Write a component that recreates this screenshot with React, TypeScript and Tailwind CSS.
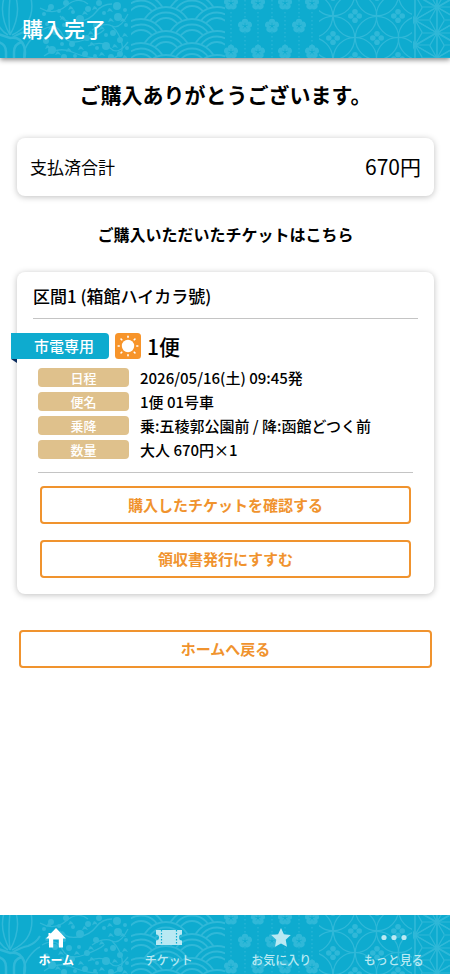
import { ReactNode } from "react";

const LINE = "#30b8d8";

const branches = [
  "M40 8 Q54 16 66 6 T88 4",
  "M42 30 Q56 22 62 34 T84 40 T104 30",
  "M44 56 Q58 46 72 52 T98 58",
  "M60 16 Q66 24 78 22 T96 12 T112 4",
  "M92 30 Q104 22 112 26 T128 14",
  "M88 46 Q102 40 110 48 T128 42",
  "M112 26 Q120 34 122 44 T114 58",
];

// x, y, radius
const plums = [
  [44, 14, 2], [51, 7, 3], [59, 11, 2], [66, 3, 3], [73, 12, 2], [80, 19, 4], [88, 9, 3],
  [99, 3, 3], [104, 13, 2], [117, 6, 4], [125, 10, 2], [47, 24, 2], [55, 32, 3], [64, 25, 2],
  [69, 33, 3], [46, 41, 3], [52, 50, 4], [62, 44, 2], [72, 44, 3], [79, 32, 2], [87, 38, 3],
  [96, 25, 3], [106, 35, 2], [118, 17, 4], [126, 25, 2], [113, 33, 3], [106, 46, 4], [97, 48, 2],
  [85, 54, 3], [75, 56, 2], [120, 40, 3], [127, 48, 2], [111, 57, 3], [64, 57, 3], [95, 56, 2],
  [120, 54, 3],
];

const twigs = [
  [48, 10], [62, 18], [70, 8], [84, 13], [94, 8], [109, 10], [122, 20], [50, 28], [60, 38],
  [76, 38], [90, 33], [101, 28], [110, 20], [124, 35], [47, 47], [57, 53], [68, 50], [80, 48],
  [91, 44], [101, 54], [114, 46], [124, 57],
];

const waves = [
  [141, -5], [192, -5], [166, 7], [217, 7], [141, 19], [192, 19], [166, 31], [217, 31],
  [141, 43], [192, 43], [166, 55], [217, 55],
];

const blossoms = [
  [231, 3], [258, 3], [285, 3], [312, 3], [245, 26], [272, 26], [299, 26],
  [231, 52], [258, 52], [285, 52], [312, 52],
];

const rings = [
  [311, 16], [355, 16], [398, 16], [333, 38], [377, 38], [420, 38], [333, -6], [377, -6],
  [420, -6], [355, 59], [398, 59], [311, 59],
];

const stars = [
  [415, -5], [415, 20], [415, 45], [437, -18], [437, 7], [437, 33], [437, 58], [459, -5],
  [459, 20], [459, 45], [415, 70],
];

function Pattern({ id }: { id: string }) {
  return (
    <svg
      className="absolute inset-0 h-full w-full"
      viewBox="0 0 450 59"
      preserveAspectRatio="xMidYMin slice"
      fill="none"
      stroke={LINE}
      aria-hidden="true"
    >
      <clipPath id={id + "-sea"}><rect x="131" width="94" height="59" /></clipPath>
      <clipPath id={id + "-ring"}><rect x="319" width="93" height="59" /></clipPath>
      <clipPath id={id + "-star"}><rect x="413" width="40" height="59" /></clipPath>

      {/* noshi knot */}
      <g strokeWidth="1.5">
        <path d="M10 35 Q-1 15 4 -2 M10 35 Q21 15 16 -2 M10 35 Q8 16 10 -2 M12 35 Q36 24 31 -2 M8 35 Q-4 28 -6 10" />
        <path d="M13 37 Q22 32 28 31 Q36 28 40 21" strokeWidth="2" />
        <path d="M24 59 Q23 50 29 42 T40 32" />
      </g>
      <path
        d="M-2 34 Q10 38 10 38 Q20 36 24 46 Q26 52 24 60 M-2 42 Q6 44 6 52 L6 60 M14 60 L14 52 Q14 44 22 42"
        strokeWidth="2.5"
      />

      {/* plum branches */}
      {branches.map((d) => <path key={d} d={d} strokeWidth="1.3" />)}
      <g fill={LINE} stroke="none">
        {plums.map(([x, y, r]) => <circle key={x + "-" + y} cx={x} cy={y} r={r} />)}
        {twigs.map(([x, y]) => (
          <path key={x + "-" + y} d={`M${x - 2} ${y + 2}l2-4 2 1 2 3-3-1z`} />
        ))}
      </g>

      {/* waves */}
      <g clipPath={`url(#${id}-sea)`} strokeWidth="1.8">
        {waves.map(([x, y]) => (
          <g key={x + "-" + y} fill="#0eabcf">
            <circle cx={x} cy={y + 25} r="25" />
            <circle cx={x} cy={y + 25} r="19.5" />
            <circle cx={x} cy={y + 25} r="14" />
          </g>
        ))}
      </g>

      {/* blossoms hanging on dotted threads */}
      {[231, 245, 258, 272, 285, 299, 312].map((x) => (
        <path key={x} d={`M${x} 0V59`} strokeDasharray="1.5 2.5" strokeWidth="1" />
      ))}
      {blossoms.map(([x, y]) => (
        <g key={x + "-" + y} transform={`translate(${x} ${y})`}>
          {[0, 72, 144, 216, 288].map((a) => (
            <circle key={a} cy="-4" r="3.2" fill={LINE} stroke="none" transform={`rotate(${a})`} />
          ))}
          {[0, 72, 144, 216, 288].map((a) => (
            <path key={a} d="M0 0V-3.2" stroke="#0eabcf" strokeWidth="0.6" transform={`rotate(${a})`} />
          ))}
        </g>
      ))}

      {/* interlocking rings */}
      <g clipPath={`url(#${id}-ring)`} strokeWidth="1.3">
        {rings.map(([x, y]) => (
          <g key={x + "-" + y} transform={`translate(${x} ${y})`}>
            <circle r="21.7" />
            {[0, 90, 180, 270].map((a) => (
              <circle key={a} cy="-4.2" r="2.8" fill={LINE} stroke="none" transform={`rotate(${a})`} />
            ))}
          </g>
        ))}
      </g>

      {/* hemp leaves */}
      <g clipPath={`url(#${id}-star)`} strokeWidth="1.2">
        {stars.map(([x, y]) => (
          <g key={x + "-" + y} transform={`translate(${x} ${y})`}>
            {[0, 60, 120, 180, 240, 300].map((a) => (
              <path key={a} d="M0 0V-25.4M0 0H14.6" transform={`rotate(${a})`} />
            ))}
            <circle r="2.5" fill={LINE} stroke="none" />
          </g>
        ))}
      </g>
    </svg>
  );
}

function SunIcon() {
  return (
    <svg className="h-[26px] w-[26px]" viewBox="0 0 26 26" aria-hidden="true">
      <rect width="26" height="26" rx="3.5" fill="#f7942a" />
      <circle cx="13" cy="13" r="6.2" fill="#fff" />
      {[0, 45, 90, 135, 180, 225, 270, 315].map((a) => (
        <path
          key={a}
          d="M13 3.2V4.2"
          stroke="#fff"
          strokeWidth="1.6"
          strokeLinecap="round"
          transform={`rotate(${a} 13 13)`}
        />
      ))}
    </svg>
  );
}

function OutlineButton({ children }: { children: ReactNode }) {
  return (
    <button className="h-[38px] w-full rounded-sm border-2 border-[#f0932e] bg-white text-[15px] font-bold text-[#f0932e]">
      {children}
    </button>
  );
}

const details = [
  { label: "日程", value: "2026/05/16(土) 09:45発" },
  { label: "便名", value: "1便 01号車" },
  { label: "乗降", value: "乗:五稜郭公園前 / 降:函館どつく前" },
  { label: "数量", value: "大人 670円×1" },
];

const tabs = [
  {
    name: "ホーム",
    active: true,
    icon: <path d="M14 1L24 11.5H21V20.5H16.8V12.5H11.2V20.5H7V11.5H4L6.5 8.8V6H8.5V6.8Z" />,
  },
  {
    name: "チケット",
    active: false,
    icon: (
      <>
        <path d="M1 3H27V7.5A3 3 0 0 0 27 13.5V18H1V13.5A3 3 0 0 0 1 7.5Z" />
        <path d="M6.5 3V18M21.5 3V18" stroke="#0eabcf" strokeWidth="1.2" strokeDasharray="1.5 1.5" />
      </>
    ),
  },
  {
    name: "お気に入り",
    active: false,
    icon: <path d="M14 1L16.9 7.3L23.8 8.1L18.7 12.8L20 19.8L14 16.4L8 19.8L9.3 12.8L4.2 8.1L11.1 7.3Z" />,
  },
  {
    name: "もっと見る",
    active: false,
    icon: (
      <>
        <circle cx="4" cy="10.5" r="2.6" />
        <circle cx="14" cy="10.5" r="2.6" />
        <circle cx="24" cy="10.5" r="2.6" />
      </>
    ),
  },
];

export default function App() {
  return (
    <div className="flex min-h-screen flex-col bg-white font-['Noto_Sans_CJK_JP',sans-serif] text-black">
      {/*title bar*/}
      <header className="relative flex h-[58px] items-center bg-[#0eabcf] px-[22px] shadow-[0_2px_5px_rgba(0,0,0,0.45)]">
        <Pattern id="top" />
        <p className="relative text-[21px] font-medium text-white">購入完了</p>
      </header>

      <main className="flex grow flex-col pr-4 pl-[17px]">
        <h1 className="mt-5 text-center text-[21px] leading-8 font-bold">ご購入ありがとうございます。</h1>

        <section className="mt-7 flex h-[58px] items-center justify-between rounded-lg px-[13px] shadow-[0_1px_6px_rgba(0,0,0,0.25)]">
          <span className="text-[17px]">支払済合計</span>
          <span className="text-[21px]">670円</span>
        </section>

        <h2 className="mt-[26px] text-center text-[16px] leading-6 font-bold">
          ご購入いただいたチケットはこちら
        </h2>

        {/*ticket card*/}
        <section className="mt-[26px] rounded-lg px-4 pb-4 shadow-[0_1px_6px_rgba(0,0,0,0.25)]">
          <h3 className="border-b border-[#c4c4c4] pt-3 pb-[10px] text-[17px] leading-6 font-medium">
            区間1 (箱館ハイカラ號)
          </h3>

          <div className="mt-[14px] -ml-[22px] flex items-center">
            <div className="relative flex h-[26px] w-[98px] items-center justify-center rounded-r-sm bg-[#0eabcf] pl-2 text-[15px] font-medium text-white">
              市電専用
              <svg className="absolute top-full left-0 h-1 w-1.5" viewBox="0 0 6 4" aria-hidden="true">
                <path d="M0 0H6V4Z" fill="#0b2c5e" />
              </svg>
            </div>
            <div className="ml-[6px]"><SunIcon /></div>
            <p className="ml-[6px] text-[21px] leading-6 font-medium">1便</p>
          </div>

          <dl className="mt-[9px] flex flex-col gap-[5px] px-[5px]">
            {details.map((d) => (
              <div key={d.label} className="flex h-[19px] items-center gap-[11px]">
                <dt className="h-[19px] w-[91px] shrink-0 rounded-sm bg-[#dfc18c] text-center text-[13px] leading-[19px] font-medium text-white">
                  {d.label}
                </dt>
                <dd className="text-[15px] leading-[19px] font-medium whitespace-nowrap">{d.value}</dd>
              </div>
            ))}
          </dl>

          <div className="mx-[5px] mt-[13px] border-t border-[#c4c4c4]" />
          <div className="mt-[13px] flex flex-col gap-4 px-[7px]">
            <OutlineButton>購入したチケットを確認する</OutlineButton>
            <OutlineButton>領収書発行にすすむ</OutlineButton>
          </div>
        </section>

        <div className="mt-9 mb-6 px-[2px]">
          <OutlineButton>ホームへ戻る</OutlineButton>
        </div>
      </main>

      {/*bottom tabs*/}
      <nav className="sticky bottom-0 h-[59px] bg-[#0eabcf]">
        <Pattern id="bottom" />
        <div className="relative grid h-full grid-cols-4">
          {tabs.map((tab) => (
            <a
              key={tab.name}
              href="#"
              className={
                tab.active
                  ? "flex flex-col items-center pt-3 text-[12px] font-bold text-white"
                  : "flex flex-col items-center pt-3 text-[12px] font-medium text-[#b9e9f3]"
              }
            >
              <svg className="h-[21px] w-7" viewBox="0 0 28 21" fill="currentColor" aria-hidden="true">
                {tab.icon}
              </svg>
              <span className="mt-0.5 leading-5">{tab.name}</span>
            </a>
          ))}
        </div>
      </nav>
    </div>
  );
}
